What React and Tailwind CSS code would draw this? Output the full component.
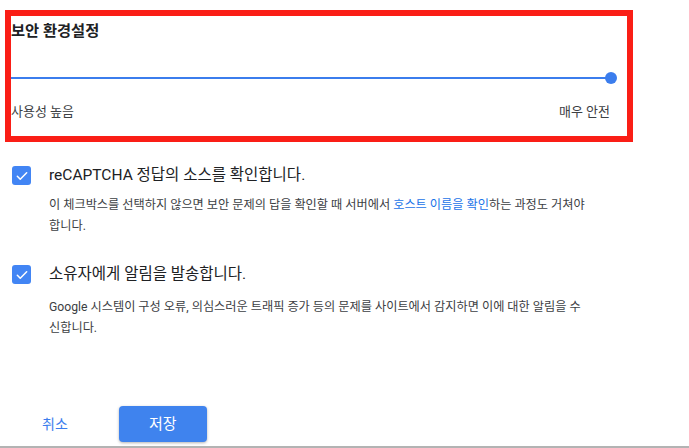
import React from "react";

function Check() {
  return (
    <div className="w-[19px] h-[19px] rounded-[3px] bg-[#4285f4] flex items-center justify-center shrink-0">
      <svg width="14" height="14" viewBox="0 0 24 24" fill="none">
        <path d="M4 12.5l5 5L20 6.5" stroke="white" strokeWidth="2.6" strokeLinecap="round" strokeLinejoin="round" />
      </svg>
    </div>
  );
}

export default function App() {
  return (
    <div className="w-[689px] h-[448px] bg-white flex flex-col font-['Roboto','Noto_Sans_CJK_KR',sans-serif] text-[#202124] overflow-hidden">
      <div className="pt-[10px] pl-[5px]">
        <section className="w-[628px] h-[132px] border-[6px] border-[#fa1e16] flex flex-col">
          <h1 className="mt-[5px] text-[15.3px] leading-[20px] font-bold text-[#202124]">보안 환경설정</h1>
          <div className="mt-[31px] h-[12px] pr-[10px] flex items-center relative">
            <div className="flex-1 h-[2px] bg-[#3b7ded]" />
            <div className="w-[12px] h-[12px] rounded-full bg-[#3b7ded] -ml-[6px]" />
          </div>
          <div className="mt-[18px] pr-[17px] flex justify-between text-[13px] leading-[20px] text-[#3c4043]">
            <span>사용성 높음</span>
            <span>매우 안전</span>
          </div>
        </section>
      </div>

      <div className="pl-[12px] mt-[23px] flex flex-col">
        <div className="flex items-start">
          <div className="mt-[1px]"><Check /></div>
          <div className="ml-[18px] flex flex-col">
            <div className="text-[15.5px] leading-[20px] text-[#202124]">reCAPTCHA 정답의 소스를 확인합니다.</div>
            <div className="mt-[10px] text-[12.2px] leading-[21px] text-[#3c4043]">
              <div className="whitespace-nowrap">
                이 체크박스를 선택하지 않으면 보안 문제의 답을 확인할 때 서버에서 <span className="text-[#1a73e8]">호스트 이름을 확인</span>하는 과정도 거쳐야
              </div>
              <div>합니다.</div>
            </div>
          </div>
        </div>

        <div className="flex items-start mt-[27px]">
          <div className="mt-[1px]"><Check /></div>
          <div className="ml-[18px] flex flex-col">
            <div className="text-[15.5px] leading-[20px] text-[#202124]">소유자에게 알림을 발송합니다.</div>
            <div className="mt-[13px] text-[12.2px] leading-[21px] text-[#3c4043]">
              <div className="whitespace-nowrap">
                Google 시스템이 구성 오류, 의심스러운 트래픽 증가 등의 문제를 사이트에서 감지하면 이에 대한 알림을 수
              </div>
              <div>신합니다.</div>
            </div>
          </div>
        </div>
      </div>

      <div className="mt-auto flex items-center pl-[42px] pb-[4px]">
        <button className="text-[14px] text-[#3b7ded] leading-[20px]">취소</button>
        <button className="ml-[51px] w-[88px] h-[36px] rounded-[4px] bg-[#3f83ee] text-white text-[15px] shadow-[0_1px_3px_rgba(0,0,0,0.3)]">저장</button>
      </div>
      <div className="h-[2px] bg-[#b3b3b3] shrink-0" />
    </div>
  );
}
